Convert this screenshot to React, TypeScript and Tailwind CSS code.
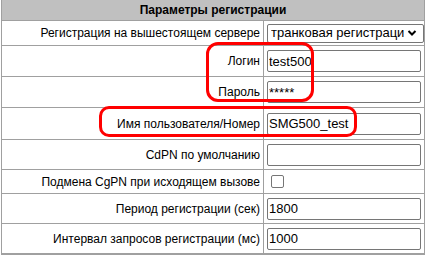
import React from 'react';

const font = { fontFamily: '"Liberation Sans", Arial, sans-serif' };

const Row = ({ label, h, children }: { label: string; h: string; children?: React.ReactNode }) => (
  <div className={`flex border-b border-[#a0a0a0] ${h}`}>
    <div className="w-[262px] shrink-0 border-r border-[#a0a0a0] flex items-center justify-end pr-[3px] text-[12px] text-black">
      {label}
    </div>
    <div className="flex-1 flex items-center">{children}</div>
  </div>
);

const TextInput = ({ value }: { value: string }) => (
  <input
    readOnly
    value={value}
    className="ml-[3px] w-[154px] h-[22px] border border-[#767676] rounded-[2px] px-[1px] text-[13px] text-black outline-none bg-white"
    style={font}
  />
);

export default function App() {
  return (
    <div className="relative w-[427px] h-[258px] bg-white overflow-hidden" style={font}>
      <div className="ml-px w-[424px] border-x border-b border-[#a0a0a0]">
        <div className="h-[21px] bg-[#c0c0c0] border-b border-[#a0a0a0] flex items-center justify-center text-[12px] font-bold text-black">
          Параметры регистрации
        </div>
        <Row label="Регистрация на вышестоящем сервере" h="h-[25px]">
          <div className="ml-[3px] w-[157px] h-[19px] border border-[#767676] rounded-[2px] flex items-center pl-[3px] pr-[6px] text-[13px] text-black">
            <span className="flex-1 overflow-hidden whitespace-nowrap">транковая регистраци</span>
            <svg width="10" height="8" viewBox="0 0 10 8" className="shrink-0 ml-[1px]">
              <path d="M1.5 2 L5 5.5 L8.5 2" fill="none" stroke="#000" strokeWidth="2" />
            </svg>
          </div>
        </Row>
        <Row label="Логин" h="h-[31px]"><TextInput value="test500" /></Row>
        <Row label="Пароль" h="h-[31px]"><TextInput value="*****" /></Row>
        <Row label="Имя пользователя/Номер" h="h-[32px]"><TextInput value="SMG500_test" /></Row>
        <Row label="CdPN по умолчанию" h="h-[30px]"><TextInput value="" /></Row>
        <Row label="Подмена CgPN при исходящем вызове" h="h-[24px]">
          <div className="ml-[7px] w-[13px] h-[13px] border border-[#767676] rounded-[2px] bg-white" />
        </Row>
        <Row label="Период регистрации (сек)" h="h-[30px]"><TextInput value="1800" /></Row>
        <Row label="Интервал запросов регистрации (мс)" h="h-[30px]"><TextInput value="1000" /></Row>
      </div>
      <div className="absolute left-[206px] top-[42px] w-[108px] h-[60px] border-[3px] border-[#ff0000] rounded-[12px]" />
      <div className="absolute left-[99px] top-[106px] w-[258px] h-[31px] border-[3px] border-[#ff0000] rounded-[10px]" />
    </div>
  );
}
